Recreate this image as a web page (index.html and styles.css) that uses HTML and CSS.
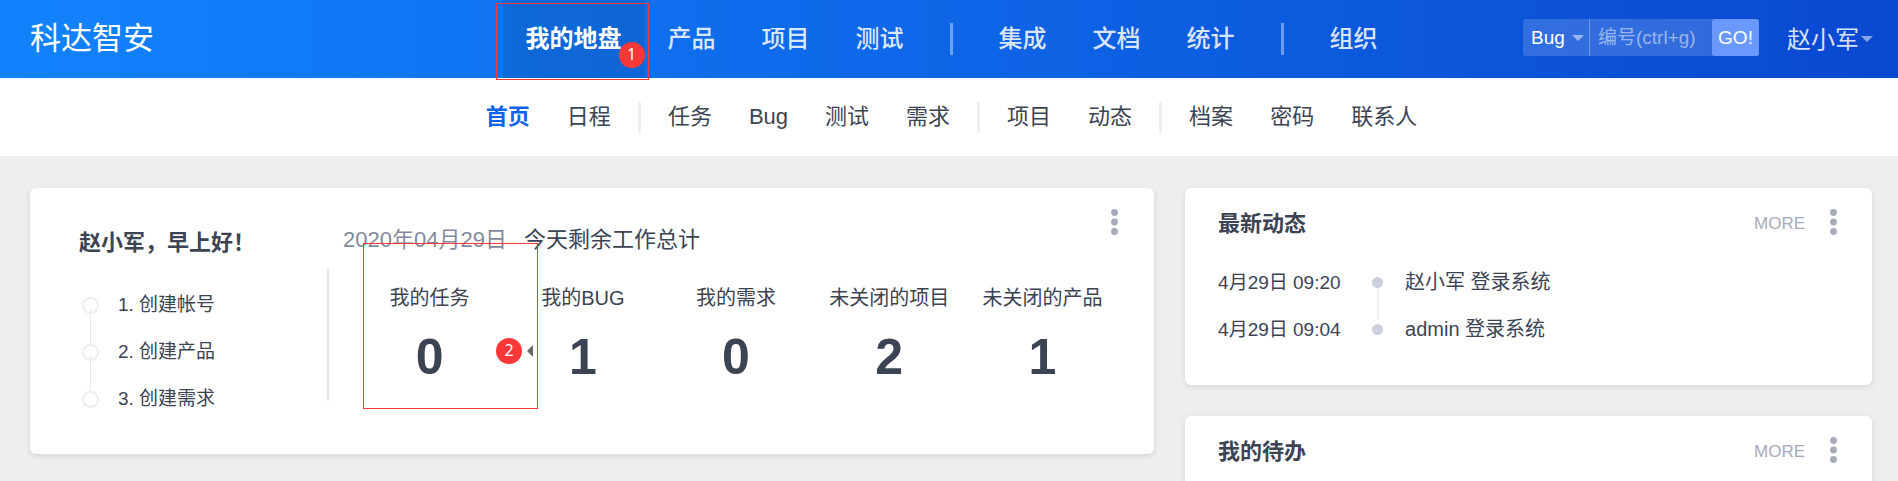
FILE: index.html
```html
<!DOCTYPE html>
<html lang="zh-CN">
<head>
<meta charset="utf-8">
<title>科达智安</title>
<link rel="stylesheet" href="styles.css">
</head>
<body>
<header class="header">
  <h1 class="brand">科达智安</h1>
  <nav class="main-nav">
    <a class="main-link is-active" href="#">我的地盘<span class="callout callout-nav"><span class="callout-badge">1</span></span></a>
    <a class="main-link" href="#">产品</a>
    <a class="main-link" href="#">项目</a>
    <a class="main-link" href="#">测试</a>
    <span class="main-divider"></span>
    <a class="main-link" href="#">集成</a>
    <a class="main-link" href="#">文档</a>
    <a class="main-link" href="#">统计</a>
    <span class="main-divider"></span>
    <a class="main-link" href="#">组织</a>
  </nav>
  <div class="tools">
    <form class="search">
      <span class="search-type">
        <select class="search-select" aria-label="搜索类型"><option>Bug</option></select>
        <span class="caret"></span>
      </span>
      <input class="search-input" type="text" placeholder="编号(ctrl+g)" aria-label="编号">
      <button class="search-go" type="button">GO!</button>
    </form>
    <button class="user" type="button">赵小军<span class="caret"></span></button>
  </div>
</header>

<nav class="sub-nav">
  <div class="sub-group">
    <a class="sub-link is-active" href="#">首页</a>
    <a class="sub-link" href="#">日程</a>
  </div>
  <span class="sub-divider"></span>
  <div class="sub-group">
    <a class="sub-link" href="#">任务</a>
    <a class="sub-link" href="#">Bug</a>
    <a class="sub-link" href="#">测试</a>
    <a class="sub-link" href="#">需求</a>
  </div>
  <span class="sub-divider"></span>
  <div class="sub-group">
    <a class="sub-link" href="#">项目</a>
    <a class="sub-link" href="#">动态</a>
  </div>
  <span class="sub-divider"></span>
  <div class="sub-group">
    <a class="sub-link" href="#">档案</a>
    <a class="sub-link" href="#">密码</a>
    <a class="sub-link" href="#">联系人</a>
  </div>
</nav>

<main class="board">
  <section class="card welcome">
    <div class="greeting">
      <h2 class="greeting-title">赵小军，早上好！</h2>
      <ol class="steps">
        <li class="step"><a class="step-link" href="#">1. 创建帐号</a></li>
        <li class="step"><a class="step-link" href="#">2. 创建产品</a></li>
        <li class="step"><a class="step-link" href="#">3. 创建需求</a></li>
      </ol>
    </div>
    <div class="welcome-divider"></div>
    <div class="summary">
      <p class="summary-head"><span class="summary-date">2020年04月29日</span><span>今天剩余工作总计</span></p>
      <div class="stats">
        <div class="stat"><span class="stat-label">我的任务</span><a class="stat-value" href="#">0</a><span class="callout callout-stat"><span class="callout-badge">2</span><span class="callout-arrow"></span></span></div>
        <div class="stat"><span class="stat-label">我的BUG</span><a class="stat-value" href="#">1</a></div>
        <div class="stat"><span class="stat-label">我的需求</span><a class="stat-value" href="#">0</a></div>
        <div class="stat"><span class="stat-label">未关闭的项目</span><a class="stat-value" href="#">2</a></div>
        <div class="stat"><span class="stat-label">未关闭的产品</span><a class="stat-value" href="#">1</a></div>
      </div>
    </div>
    <button class="dots welcome-dots" type="button" aria-label="更多操作"><svg class="dots-icon" width="7" height="26" viewBox="0 0 7 26"><circle cx="3.5" cy="3.5" r="3.4"/><circle cx="3.5" cy="13" r="3.4"/><circle cx="3.5" cy="22.5" r="3.4"/></svg></button>
  </section>

  <div class="side">
    <section class="card panel">
      <div class="panel-head">
        <h2 class="panel-title">最新动态</h2>
        <a class="more" href="#">MORE</a>
        <button class="dots" type="button" aria-label="更多操作"><svg class="dots-icon" width="7" height="26" viewBox="0 0 7 26"><circle cx="3.5" cy="3.5" r="3.4"/><circle cx="3.5" cy="13" r="3.4"/><circle cx="3.5" cy="22.5" r="3.4"/></svg></button>
      </div>
      <ul class="feed">
        <li class="feed-item"><time class="feed-time">4月29日 09:20</time><span class="feed-mark"></span><span>赵小军 登录系统</span></li>
        <li class="feed-item"><time class="feed-time">4月29日 09:04</time><span class="feed-mark"></span><span>admin 登录系统</span></li>
      </ul>
    </section>
    <section class="card panel">
      <div class="panel-head">
        <h2 class="panel-title">我的待办</h2>
        <a class="more" href="#">MORE</a>
        <button class="dots" type="button" aria-label="更多操作"><svg class="dots-icon" width="7" height="26" viewBox="0 0 7 26"><circle cx="3.5" cy="3.5" r="3.4"/><circle cx="3.5" cy="13" r="3.4"/><circle cx="3.5" cy="22.5" r="3.4"/></svg></button>
      </div>
    </section>
  </div>
</main>
</body>
</html>
```
FILE: styles.css
```css
*,
*::before,
*::after {
  box-sizing: border-box;
}

body {
  margin: 0;
  color: #3c4353;
  background: #eee;
  font-family: "Liberation Sans", "Noto Sans CJK SC", sans-serif;
  font-size: 20px;
}

h1, h2, p, ol, ul {
  margin: 0;
  padding: 0;
}

ol, ul {
  list-style: none;
}

a {
  color: inherit;
  text-decoration: none;
}

button, input, select {
  margin: 0;
  padding: 0;
  border: 0;
  background: none;
  font-family: inherit;
}

/* Header */
.header {
  display: grid;
  grid-template-columns: 1fr auto 1fr;
  align-items: center;
  height: 78px;
  padding: 0 25px 0 30px;
  background: linear-gradient(90deg, #1283fc, #0a48d1);
}

.brand {
  color: #fff;
  font-size: 31px;
  font-weight: 400;
  line-height: 78px;
}

.main-nav {
  display: flex;
  align-items: center;
  white-space: nowrap;
}

.main-link {
  position: relative;
  padding: 0 23px;
  color: rgba(255, 255, 255, .85);
  font-size: 24px;
  font-weight: 500;
  line-height: 78px;
}

.main-link.is-active {
  color: #fff;
  background: rgba(12, 80, 160, .3);
  font-weight: 700;
}

.main-divider {
  width: 3px;
  height: 32px;
  margin: 0 23px;
  background: rgba(255, 255, 255, .4);
}

.tools {
  display: flex;
  justify-content: flex-end;
  align-items: center;
  gap: 28px;
}

.search {
  display: flex;
  height: 37px;
  margin-bottom: 3px;
  border-radius: 3px;
  background: rgba(255, 255, 255, .16);
}

.search-type {
  display: flex;
  align-items: center;
  padding: 0 5px 0 8px;
  border-right: 1px solid rgba(255, 255, 255, .3);
}

.search-select {
  width: 41px;
  height: 37px;
  appearance: none;
  color: #fff;
  font-size: 19px;
}

.search-input {
  width: 122px;
  padding-left: 8px;
  color: #fff;
  font-size: 19px;
}

.search-input::placeholder {
  color: rgba(255, 255, 255, .5);
}

.search-go {
  width: 47px;
  border-radius: 3px;
  color: #fff;
  background: #6b98ff;
  font-size: 19px;
}

.user {
  display: flex;
  align-items: center;
  gap: 2px;
  color: rgba(255, 255, 255, .85);
  font-size: 24px;
  line-height: 37px;
}

.caret {
  border: 6px solid transparent;
  border-top-color: rgba(255, 255, 255, .5);
  border-bottom: 0;
}

/* Secondary navigation */
.sub-nav {
  display: flex;
  justify-content: center;
  align-items: center;
  gap: 27px;
  height: 78px;
  padding: 0 25px 0 30px;
  background: #fff;
}

.sub-group {
  display: flex;
  gap: 37px;
}

.sub-link {
  font-size: 22px;
  line-height: 78px;
  white-space: nowrap;
}

.sub-link.is-active {
  color: #0c64eb;
  font-weight: 700;
}

.sub-divider {
  width: 3px;
  height: 31px;
  background: #eee;
}

/* Dashboard */
.board {
  display: grid;
  grid-template-columns: 18fr 11fr;
  align-items: start;
  gap: 31px;
  padding: 32px 26px 0 30px;
}

.card {
  border-radius: 6px;
  background: #fff;
  box-shadow: 0 2px 6px rgba(0, 0, 0, .1);
}

.side {
  display: grid;
  gap: 31px;
}

.welcome {
  position: relative;
  display: flex;
  padding: 32px 35px 32px 49px;
}

.greeting {
  flex: 0 0 248px;
}

.greeting-title {
  font-size: 22px;
  line-height: 46px;
}

.steps {
  padding-top: 15px;
}

.step {
  position: relative;
  padding-left: 39px;
  font-size: 19px;
  line-height: 47px;
}

.step::before {
  content: "";
  position: absolute;
  top: 16px;
  left: 3px;
  width: 17px;
  height: 17px;
  border: 2px solid #eee;
  border-radius: 50%;
}

.step:not(:last-child)::after {
  content: "";
  position: absolute;
  top: 28px;
  left: 11px;
  width: 1px;
  height: 35px;
  background: #e8e8e8;
}

.welcome-divider {
  width: 2px;
  height: 133px;
  margin-top: 48px;
  background: #e4e8ee;
}

.summary {
  flex: 1;
  padding-left: 14px;
}

.summary-head {
  display: flex;
  gap: 17px;
  font-size: 22px;
  line-height: 40px;
}

.summary-date {
  color: #838a9d;
}

.stats {
  display: grid;
  grid-template-columns: repeat(5, 1fr);
  padding: 18px 0 8px 10px;
}

.stat {
  position: relative;
  display: flex;
  flex-direction: column;
  align-items: center;
}

.stat-label {
  line-height: 40px;
  white-space: nowrap;
}

.stat-value {
  font-size: 50px;
  font-weight: 700;
  line-height: 78px;
}

.dots {
  display: flex;
  cursor: pointer;
}

.dots-icon {
  fill: #a6aaba;
}

.welcome-dots {
  position: absolute;
  top: 21px;
  right: 36px;
}

/* Side panels */
.panel {
  padding-bottom: 32px;
}

.panel-head {
  display: flex;
  align-items: center;
  height: 71px;
  padding: 1px 35px 0 33px;
}

.panel-title {
  flex: 1;
  font-size: 22px;
  line-height: 30px;
}

.more {
  margin-right: 25px;
  color: #a6aaba;
  font-size: 17px;
}

.panel-head .dots {
  margin-bottom: 4px;
}

.feed {
  padding: 0 33px;
}

.feed-item {
  display: flex;
  align-items: center;
  line-height: 47px;
}

.feed-time {
  width: 154px;
  font-size: 19px;
}

.feed-mark {
  position: relative;
  width: 11px;
  height: 11px;
  margin-right: 22px;
  border-radius: 50%;
  background: #cbd0db;
}

.feed-item:not(:last-child) .feed-mark::after {
  content: "";
  position: absolute;
  top: 11px;
  left: 5px;
  width: 2px;
  height: 32px;
  background: #eee;
}

/* Numbered callouts */
.callout {
  position: absolute;
  border: 1px solid #fb3838;
  pointer-events: none;
}

.callout-nav {
  inset: 3px -4px -2px -7px;
}

.callout-stat {
  top: -35px;
  left: 10px;
  width: 175px;
  height: 166px;
  z-index: 1;
}

.callout-badge {
  position: absolute;
  width: 26px;
  height: 26px;
  border-radius: 50%;
  color: #fff;
  background: #fb3838;
  font-family: "Noto Sans", sans-serif;
  font-size: 16px;
  font-weight: 400;
  line-height: 25px;
  text-align: center;
}

.callout-nav .callout-badge {
  right: 3px;
  bottom: 11px;
}

.callout-stat .callout-badge {
  right: 15px;
  top: 94px;
}

.callout-arrow {
  position: absolute;
  top: 101px;
  right: 4px;
  border: 6px solid transparent;
  border-right-color: #666;
  border-left: 0;
}
```
